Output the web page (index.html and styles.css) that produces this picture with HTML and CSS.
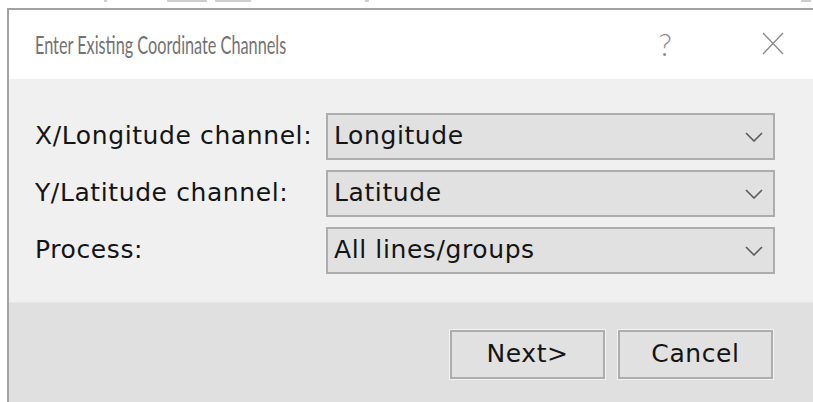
FILE: index.html
```html
<!DOCTYPE html>
<html>
<head>
<meta charset="utf-8">
<link rel="stylesheet" href="styles.css">
</head>
<body>
<div class="backdrop">
  <i class="mark m1"></i>
  <i class="mark m2"></i>
  <i class="mark m3"></i>
  <i class="mark m4"></i>
  <i class="mark m5"></i>
</div>
<div class="window">
  <div class="titlebar">
    <span class="title"><span>Enter Existing Coordinate Channels</span></span>
    <span class="help">?</span>
    <svg class="close" width="22" height="23" viewBox="0 0 22 23"><path d="M1 1 L21 22 M21 1 L1 22" stroke="#8a8a8a" stroke-width="1.3" fill="none"/></svg>
  </div>
  <div class="content">
    <div class="form">
      <label class="label">X/Longitude channel:</label>
      <div class="combo"><span>Longitude</span><svg class="chev" width="18" height="10" viewBox="0 0 18 10"><path d="M1 1 L9 9 L17 1" stroke="#5a5a5a" stroke-width="1.6" fill="none"/></svg></div>
      <label class="label">Y/Latitude channel:</label>
      <div class="combo"><span>Latitude</span><svg class="chev" width="18" height="10" viewBox="0 0 18 10"><path d="M1 1 L9 9 L17 1" stroke="#5a5a5a" stroke-width="1.6" fill="none"/></svg></div>
      <label class="label">Process:</label>
      <div class="combo"><span>All lines/groups</span><svg class="chev" width="18" height="10" viewBox="0 0 18 10"><path d="M1 1 L9 9 L17 1" stroke="#5a5a5a" stroke-width="1.6" fill="none"/></svg></div>
    </div>
  </div>
  <div class="footer">
    <button class="btn">Next&gt;</button>
    <button class="btn">Cancel</button>
  </div>
</div>
</body>
</html>
```

FILE: styles.css
```css
html, body {
  margin: 0;
  padding: 0;
  background: #ffffff;
  overflow: hidden;
}

/* strip of the window underneath; only specks of it peek out */
.backdrop {
  height: 8px;
  display: flex;
  align-items: flex-start;
  background: #ffffff;
}

.mark {
  display: block;
  height: 2px;
  background: #cdcdcd;
  border-radius: 0 0 1px 1px;
}

.m1 { margin-left: 104px; width: 3px; }
.m2 { margin-left: 60px; width: 40px; }
.m3 { margin-left: 8px; width: 36px; }
.m4 { margin-left: 114px; width: 4px; }
.m5 { margin-left: 432px; width: 10px; }

.window {
  margin-left: 7px;
  border-top: 2px solid #a3a3a3;
  border-left: 2px solid #a3a3a3;
  background: #f0f0f0;
}

.titlebar {
  height: 69px;
  background: #ffffff;
  display: flex;
  align-items: center;
  padding-left: 26px;
  padding-right: 29px;
}

.title {
  flex: 1;
  font-family: "Lato", "Noto Sans", sans-serif;
  font-size: 25px;
  color: #727272;
  padding-bottom: 2px;
  white-space: nowrap;
}

/* Caption face is a narrow one; squeeze Lato to the same proportions */
.title span {
  display: inline-block;
  transform: scaleX(0.65);
  transform-origin: left center;
}

.help {
  font-family: "Lato", "Noto Sans", sans-serif;
  font-size: 31px;
  color: #8c8c8c;
  font-weight: 300;
  margin-right: 90px;
  padding-bottom: 2px;
}

.close {
  display: block;
  margin-bottom: 2px;
}

.content {
  padding: 34px 38px 28px 26px;
}

.form {
  display: grid;
  grid-template-columns: 291px 449px;
  row-gap: 10px;
  align-items: center;
}

.label,
.combo,
.btn {
  font-family: "DejaVu Sans", sans-serif;
  font-size: 25px;
  letter-spacing: 0.6px;
  color: #141414;
}

.label {
  padding-bottom: 2px;
}

.combo {
  height: 43px;
  border: 2px solid #adadad;
  background: #e1e1e1;
  display: flex;
  align-items: center;
  padding: 0 10px 0 6px;
}

.combo span {
  flex: 1;
  padding-bottom: 2px;
}

.chev {
  display: block;
}

.footer {
  height: 110px;
  background: #e0e0e0;
  border-top: 1px solid #e6e6e6;
  display: flex;
  justify-content: flex-end;
  align-items: flex-start;
  gap: 13px;
  padding: 27px 40px 0 0;
}

.btn {
  width: 155px;
  height: 49px;
  border: 2px solid #adadad;
  outline: 1px solid #f2f2f2;
  background: #e1e1e1;
  padding: 0 0 2px 0;
}
```
